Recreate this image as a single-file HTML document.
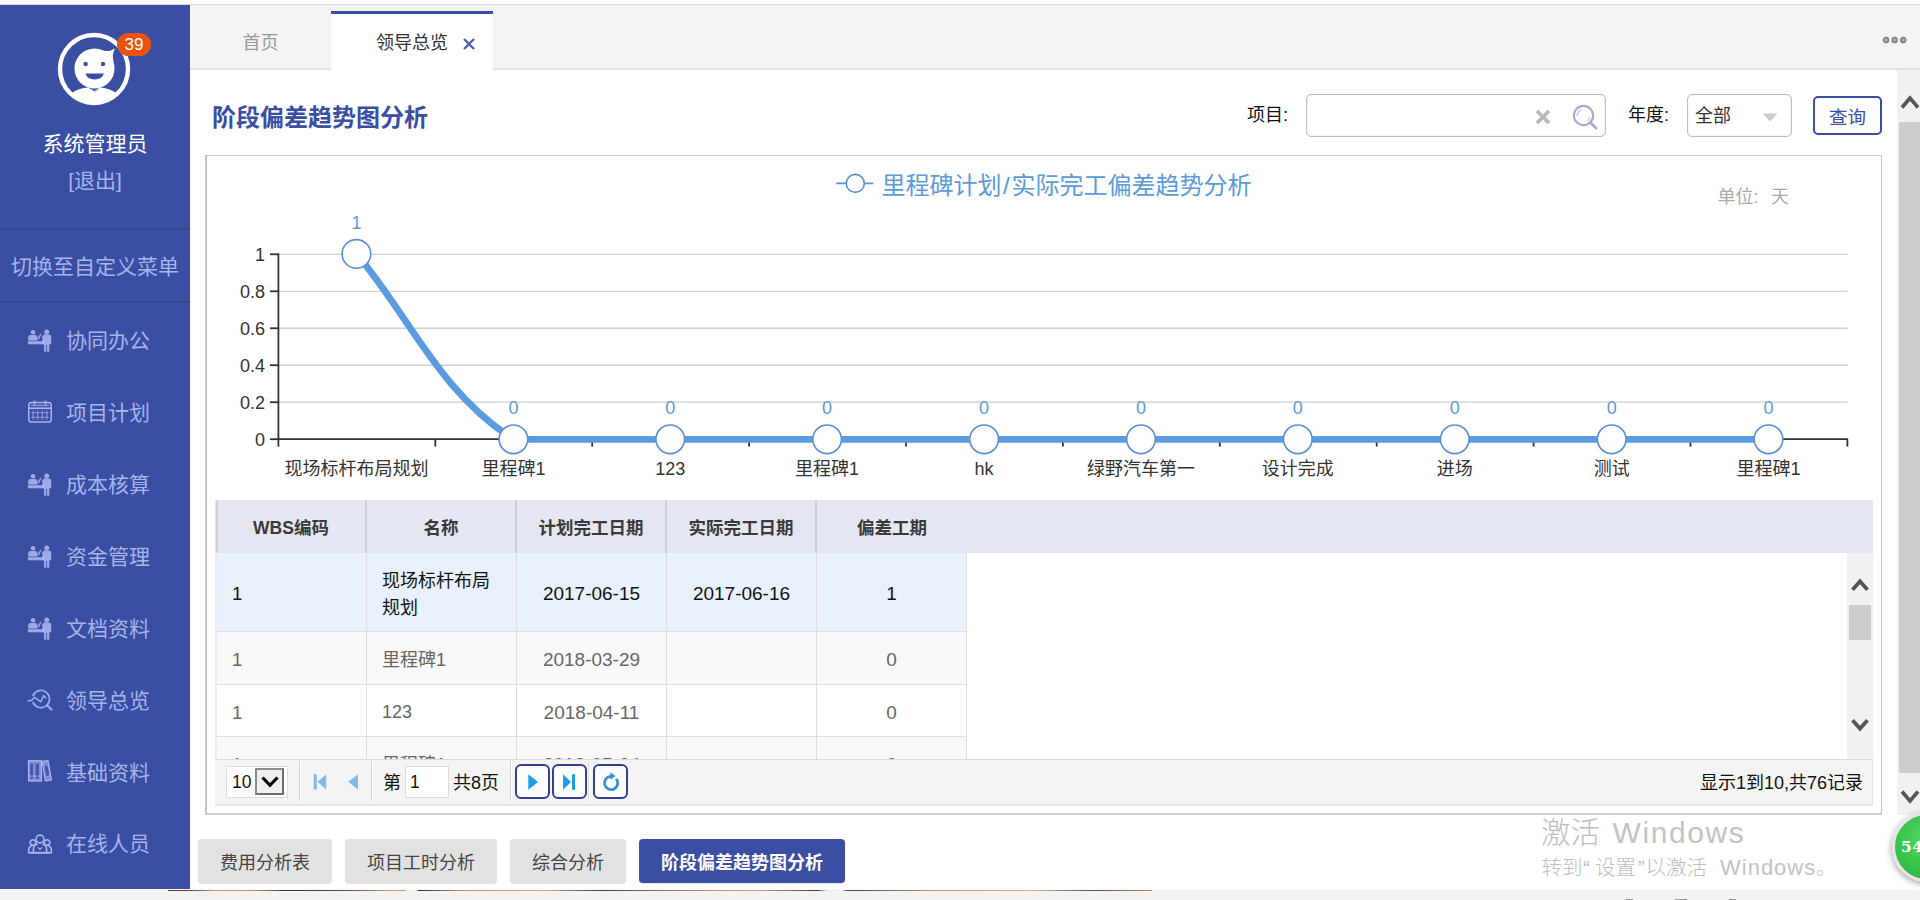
<!DOCTYPE html>
<html lang="zh-CN">
<head>
<meta charset="utf-8">
<title>领导总览 - 阶段偏差趋势图分析</title>
<style>
*{box-sizing:border-box;margin:0;padding:0}
html,body{width:1920px;height:900px;overflow:hidden;background:#fff}
body{position:relative;font-family:"Liberation Sans","Noto Sans CJK SC",sans-serif;color:#333;font-size:18px}
.abs{position:absolute}
/* top chrome */
#topline{left:0;top:4px;width:1920px;height:1px;background:#d9d9d9}
/* sidebar */
#sidebar{left:0;top:5px;width:190px;height:884px;background:#3a4ea3;color:#a5b4ec}
#sidebar .name{left:0;width:190px;top:124px;height:30px;line-height:30px;text-align:center;color:#fff;font-size:21px}
#sidebar .logout{left:0;width:190px;top:161px;height:30px;line-height:30px;text-align:center;font-size:21px}
#sidebar .sep{left:0;width:190px;height:2px;background:#344594}
#sidebar .switch{left:0;width:190px;top:247px;height:30px;line-height:30px;text-align:center;font-size:21px}
#sidebar .mi{left:0;width:190px;height:30px;line-height:30px;font-size:21px;padding-left:66px;white-space:nowrap}
#sidebar .mi svg{position:absolute;left:27px;top:3px}
.badge{left:117px;top:28px;width:34px;height:23px;border-radius:12px;background:#e9530d;color:#fff;font-size:17px;line-height:23px;text-align:center}
/* tab bar */
#tabbar{left:190px;top:5px;width:1730px;height:65px;background:#f4f4f4;border-bottom:2px solid #e1e1e1}
#tabbar .t1{left:0;top:0;width:141px;height:64px;line-height:76px;text-align:center;color:#999;font-size:18px}
#tabbar .t2{left:141px;top:6px;width:162px;height:59px;background:#fff;border-top:3px solid #3a4ea3;font-size:18px;color:#333}
#tabbar .t2 span{position:absolute;left:45px;top:14px;line-height:30px}
/* content */
#title{left:212px;top:101px;font-size:24px;font-weight:bold;color:#3a4ea3;line-height:34px;white-space:nowrap}
.lbl{font-size:18px;color:#111;line-height:30px;white-space:nowrap}
.box{box-shadow:inset 0 0 1px #b8b8b8;border:1px solid #bebebe;border-radius:5px;background:#fff}
#qbtn{left:1813px;top:96px;width:69px;height:39px;border:2px solid #3a4ea3;border-radius:5px;color:#3a4ea3;font-size:18.500px;line-height:39px;text-align:center;background:#fff}
#panel{left:205px;top:155px;width:1677px;height:660px;border-style:solid;border-color:#c8c8c8 #c6c6c6 #cdcdcd #c6c6c6;border-width:1px 1px 2px 2px;background:#fff}

#tabbar .x{left:272px;top:32px}
#tabbar .dots{left:1691px;top:29px}
#f1{left:1247px;top:100px}
#in1{left:1306px;top:94px;width:300px;height:43px}
#f2{left:1628px;top:100px}
#in2{left:1687px;top:94px;width:105px;height:43px}
#in2 span{position:absolute;left:7px;top:6px;font-size:18px;line-height:30px;color:#333}
/* page scrollbar */
#vs{left:1897px;top:70px;width:23px;height:745px;background:#f1f1f1}
#vs .thumb{left:2px;top:52px;width:21px;height:651px;background:#cdcdcd}
/* bottom */
#botbar{left:0;top:889px;width:1920px;height:11px;background:#f3f3f3;border-top:1px solid #fbfbfb}
#botbar i{position:absolute;display:block;height:1px}
.btab{top:839px;height:44px;border-radius:4px;background:#e2e2e2;color:#444;font-size:18px;line-height:49px;text-align:center;white-space:nowrap;box-shadow:0 1px 1px rgba(0,0,0,.12)}
.btab.on{background:#3a4ea3;color:#fff;font-weight:bold}
.wm{color:#bebebe;white-space:nowrap;font-weight:300}
.wm span{position:absolute;top:0}
.wm .la{color:#c3c3c3;font-weight:400}
#wm1{left:0;top:811px;font-size:29.500px;line-height:44px}
#wm2{left:0;top:850.500px;font-size:20.500px;line-height:34px}
#ball{left:1892px;top:812px;width:70px;height:70px;border-radius:50%;background:radial-gradient(circle at 45% 40%,#4fd862 0%,#37c24a 55%,#27a83a 100%);border:3px solid #ece2ec;box-shadow:0 2px 7px rgba(0,0,0,.4);color:#fff;font-family:"DejaVu Serif","Liberation Serif",serif;font-weight:bold;font-size:15.500px;line-height:64px;padding-left:6px;letter-spacing:.5px}

/* grid */
#ghead{left:215px;top:500px;width:1658px;height:53px;background:#e4e7f2}
#ghead div{position:absolute;top:0;height:53px;width:150px;line-height:57px;text-align:center;font-weight:bold;font-size:17.500px;color:#3a3a3a;border-right:2px solid #cfd0d6;white-space:nowrap}
#ghead i{position:absolute;left:1px;top:0;width:2px;height:53px;background:#cfd0d8}
#gbody{left:215px;top:553px;width:1632px;height:206px;overflow:hidden;background:#fff;box-shadow:inset 2px 0 0 #ececec}
.row{position:absolute;left:2px;width:750px}
.row div{position:absolute;top:0;height:100%;width:150px;border-right:1px solid #dedede;border-bottom:1px solid #dedede;font-size:18px;white-space:nowrap}
.row .c{text-align:center;font-size:19px}
.row .n{font-size:18.500px}
.row .l{padding-left:15px}
#gvs{left:1847px;top:553px;width:26px;height:206px;background:#f1f1f1}
#gvs .th{position:absolute;left:2px;top:52px;width:22px;height:35px;background:#cdcdcd}
#pager{left:215px;top:759px;width:1658px;height:47px;background:#f4f4f4;border-top:1px solid #dcdcdc;border-bottom:2px solid #e6e6e6;border-right:1px solid #e6e6e6;font-size:18px;color:#111}
#pager .sep{position:absolute;top:1px;width:2px;height:40px;background:#d2d2d2;border-right:1px solid #fff}
#pager .pb{position:absolute;top:4px;width:35px;height:35px;border:2px solid #323f92;border-radius:6px;background:#fdfdff}
#pager .t{position:absolute;top:8px;line-height:30px;white-space:nowrap}
</style>
</head>
<body>
<div id="topline" class="abs"></div>

<div id="sidebar" class="abs">
  <svg class="abs" style="left:44px;top:18px" width="100" height="100" viewBox="0 0 100 100">
    <defs><clipPath id="avc"><circle cx="50" cy="46" r="33"/></clipPath></defs>
    <circle cx="50" cy="46" r="34" fill="none" stroke="#fff" stroke-width="4.4"/>
    <g clip-path="url(#avc)" fill="#fff">
      <path d="M22 82q2-16 22-17.500l6 4 6-4q20 1.500 22 17.500z"/>
      <circle cx="50.500" cy="45.500" r="20"/>
      <path d="M56 27Q64 29.800 71 25.400Q67.600 31 69.600 39z"/>
    </g>
    <circle cx="41.600" cy="41" r="2.200" fill="#3a4ea3"/><circle cx="59" cy="41" r="2.200" fill="#3a4ea3"/>
    <path d="M41.400 50.600h18.400q-1.600 5.900-9.200 5.900t-9.200-5.900z" fill="#3a4ea3"/>
    <path d="M46.600 66.200l4 2.600 4-2.600" fill="none" stroke="#c9d0ea" stroke-width="1.100"/>
  </svg>
  <div class="abs badge">39</div>
  <div class="abs name">系统管理员</div>
  <div class="abs logout">[退出]</div>
  <div class="abs sep" style="top:223px"></div>
  <div class="abs switch">切换至自定义菜单</div>
  <div class="abs sep" style="top:296px"></div>
  <div class="abs mi" style="top:321px"><svg width="26" height="24" viewBox="0 0 26 24"><g fill="#a7b6ee" fill-opacity=".9"><circle cx="6.1" cy="3.2" r="2.3"/><path d="M1.2 11.4V8.6q0-2.7 2.7-2.7h4.3q2.3 0 2.3 2.5v3z"/><rect x="1" y="12.2" width="17" height="3.1"/><circle cx="19.7" cy="3.0" r="2.5"/><path d="M15.3 15.2V8.3q0-2.8 2.8-2.8h3.3q2.8 0 2.8 2.8v6.9h-1.9v7.6h-2.2v-7h-0.8v7h-2.2v-7.6z"/><path d="M10.6 9.6l2.6-5 1.1.6-2.3 5.4z"/></g></svg>协同办公</div>
  <div class="abs mi" style="top:393px"><svg style="top:2px" width="26" height="24" viewBox="0 0 26 24"><g fill="none" stroke="#a7b6ee" stroke-width="1.5"><rect x="1.8" y="2.6" width="22.4" height="19.4" rx="2.6"/><path d="M1.8 8.2h22.4" stroke-width="1.6"/><path d="M7.5 0.8v3.6M18.5 0.8v3.6" stroke-width="1.8"/><path d="M4 5.4h18" stroke-width="1.6" opacity=".7"/><path d="M4.5 12.8h17M4.5 17.2h17M6.100 10.400v9.400M10.700 10.400v9.400M15.300 10.400v9.400M19.900 10.400v9.400" stroke-width="1.1" opacity=".75"/></g></svg>项目计划</div>
  <div class="abs mi" style="top:465px"><svg width="26" height="24" viewBox="0 0 26 24"><g fill="#a7b6ee" fill-opacity=".9"><circle cx="6.1" cy="3.2" r="2.3"/><path d="M1.2 11.4V8.6q0-2.7 2.7-2.7h4.3q2.3 0 2.3 2.5v3z"/><rect x="1" y="12.2" width="17" height="3.1"/><circle cx="19.7" cy="3.0" r="2.5"/><path d="M15.3 15.2V8.3q0-2.8 2.8-2.8h3.3q2.8 0 2.8 2.8v6.9h-1.9v7.6h-2.2v-7h-0.8v7h-2.2v-7.6z"/><path d="M10.6 9.6l2.6-5 1.1.6-2.3 5.4z"/></g></svg>成本核算</div>
  <div class="abs mi" style="top:537px"><svg width="26" height="24" viewBox="0 0 26 24"><g fill="#a7b6ee" fill-opacity=".9"><circle cx="6.1" cy="3.2" r="2.3"/><path d="M1.2 11.4V8.6q0-2.7 2.7-2.7h4.3q2.3 0 2.3 2.5v3z"/><rect x="1" y="12.2" width="17" height="3.1"/><circle cx="19.7" cy="3.0" r="2.5"/><path d="M15.3 15.2V8.3q0-2.8 2.8-2.8h3.3q2.8 0 2.8 2.8v6.9h-1.9v7.6h-2.2v-7h-0.8v7h-2.2v-7.6z"/><path d="M10.6 9.6l2.6-5 1.1.6-2.3 5.4z"/></g></svg>资金管理</div>
  <div class="abs mi" style="top:609px"><svg width="26" height="24" viewBox="0 0 26 24"><g fill="#a7b6ee" fill-opacity=".9"><circle cx="6.1" cy="3.2" r="2.3"/><path d="M1.2 11.4V8.6q0-2.7 2.7-2.7h4.3q2.3 0 2.3 2.5v3z"/><rect x="1" y="12.2" width="17" height="3.1"/><circle cx="19.7" cy="3.0" r="2.5"/><path d="M15.3 15.2V8.3q0-2.8 2.8-2.8h3.3q2.8 0 2.8 2.8v6.9h-1.9v7.6h-2.2v-7h-0.8v7h-2.2v-7.6z"/><path d="M10.6 9.6l2.6-5 1.1.6-2.3 5.4z"/></g></svg>文档资料</div>
  <div class="abs mi" style="top:681px"><svg width="26" height="24" viewBox="0 0 26 24"><g fill="none" stroke="#a7b6ee" stroke-opacity=".88" stroke-width="1.8" stroke-linecap="round" stroke-linejoin="round"><path d="M6.1 6.5A8.6 8.6 0 1 1 6.1 13.7"/><path d="M20.3 16.6l4.2 3.800" stroke-width="2.3"/><path d="M1.2 11.9l3.400-.5 3.100-3.100 6.200 4.500 2.700-6.200 2 2.200" stroke-width="1.6"/></g></svg>领导总览</div>
  <div class="abs mi" style="top:753px"><svg style="top:2px" width="26" height="24" viewBox="0 0 26 24"><rect x="1.600" y="0.800" width="12.800" height="20.200" fill="#a7b6ee" fill-opacity=".62" stroke="#a7b6ee" stroke-width="1.300"/><rect x="3.2" y="3.6" width="2.8" height="15" fill="#4558ab"/><rect x="8.600" y="3.600" width="3.400" height="15" fill="#4558ab"/><rect x="2.200" y="15.400" width="11" height="1.400" fill="#a7b6ee" fill-opacity=".6"/><path d="M15.300 1.400L21 0.700 24.500 20 18.300 20.900z" fill="#a7b6ee" fill-opacity=".62" stroke="#a7b6ee" stroke-width="1.200"/><ellipse cx="19.800" cy="10.600" rx="1.700" ry="5.400" transform="rotate(-10 19.800 10.600)" fill="#4558ab"/></svg>基础资料</div>
  <div class="abs mi" style="top:824px"><svg width="26" height="24" viewBox="0 0 26 24"><g fill="none" stroke="#a7b6ee" stroke-width="1.6" stroke-linejoin="round"><circle cx="13" cy="7" r="3.9"/><circle cx="6" cy="10.6" r="2.8"/><circle cx="20" cy="10.6" r="2.8"/><path d="M6.4 20.6v-3.4q0-4.6 4.2-5.2M19.6 20.6v-3.4q0-4.6-4.2-5.2"/><path d="M1.6 20.6v-2.4q0-3.6 3.2-4.4M24.4 20.6v-2.4q0-3.6-3.2-4.4"/><path d="M1.2 20.8h23.6" stroke-width="1.9"/><path d="M10.8 15.4l2.2 2 2.2-2" stroke-width="1.2"/></g></svg>在线人员</div>
</div>

<div id="tabbar" class="abs">
  <div class="abs t1">首页</div>
  <div class="abs t2"><span>领导总览</span></div>
  <svg class="abs x" width="14" height="14" viewBox="0 0 14 14"><path d="M2 2l10 10M12 2L2 12" stroke="#4a5bb0" stroke-width="2.3" fill="none"/></svg>
  <svg class="abs dots" width="28" height="12" viewBox="0 0 28 12"><g fill="#aaa" stroke="#777" stroke-width="1.2"><circle cx="5" cy="6" r="2.6"/><circle cx="13.600" cy="6" r="2.600"/><circle cx="22.200" cy="6" r="2.600"/></g></svg>
</div>

<div id="title" class="abs">阶段偏差趋势图分析</div>
<div id="f1" class="abs lbl">项目:</div>
<div id="in1" class="abs box">
  <svg class="abs" style="left:227px;top:13px" width="18" height="18" viewBox="0 0 18 18"><path d="M3 3l12 12M15 3L3 15" stroke="#bababa" stroke-width="3.800" fill="none"/></svg>
  <svg class="abs" style="left:262px;top:6px" width="32" height="32" viewBox="0 0 32 32"><g fill="none" stroke-linecap="round"><circle cx="14.500" cy="14.500" r="9.600" stroke="#a4a9d0" stroke-width="2.100"/><path d="M21.600 21.800l5.600 5.400" stroke="#a4a9d0" stroke-width="2.600"/><path d="M8.200 14.600a6.300 6.300 0 0 1 3.400-5.600" stroke="#c9cce4" stroke-width="1.600"/><path d="M18.400 19.600a6.300 6.300 0 0 0 2.200-3" stroke="#c9cce4" stroke-width="1.400"/></g></svg>
</div>
<div id="f2" class="abs lbl">年度:</div>
<div id="in2" class="abs box"><span>全部</span>
  <svg class="abs" style="left:74px;top:18px" width="16" height="9" viewBox="0 0 16 9"><path d="M0.500 0.500h15l-7.500 8z" fill="#cdcdcd"/></svg>
</div>
<div id="qbtn" class="abs">查询</div>
<div id="panel" class="abs"></div>
<svg id="chart" class="abs" style="left:207px;top:156px" width="1675" height="344" viewBox="207 156 1675 344" font-family="'Liberation Sans','Noto Sans CJK SC',sans-serif">
<path d="M279 402.22H1847.500" stroke="#cfcfcf" stroke-width="1.300" fill="none"/>
<path d="M279 365.24H1847.500" stroke="#cfcfcf" stroke-width="1.300" fill="none"/>
<path d="M279 328.26H1847.500" stroke="#cfcfcf" stroke-width="1.300" fill="none"/>
<path d="M279 291.28H1847.500" stroke="#cfcfcf" stroke-width="1.300" fill="none"/>
<path d="M279 254.30H1847.500" stroke="#cfcfcf" stroke-width="1.300" fill="none"/>
<g stroke="#333" stroke-width="1.800" fill="none">
<path d="M278.400 253.40V440.100"/>
<path d="M277.500 439.200H1847.900"/>
<path d="M270 439.20H278.400"/>
<path d="M270 402.22H278.400"/>
<path d="M270 365.24H278.400"/>
<path d="M270 328.26H278.400"/>
<path d="M270 291.28H278.400"/>
<path d="M270 254.30H278.400"/>
<path d="M278.40 439.200V446.600"/>
<path d="M435.30 439.200V446.600"/>
<path d="M592.20 439.200V446.600"/>
<path d="M749.10 439.200V446.600"/>
<path d="M906.00 439.200V446.600"/>
<path d="M1062.90 439.200V446.600"/>
<path d="M1219.80 439.200V446.600"/>
<path d="M1376.70 439.200V446.600"/>
<path d="M1533.60 439.200V446.600"/>
<path d="M1690.50 439.200V446.600"/>
<path d="M1847.40 439.200V446.600"/>
</g>
<g font-size="18" fill="#333" text-anchor="end">
<text x="265" y="445.6">0</text>
<text x="265" y="408.6">0.2</text>
<text x="265" y="371.6">0.4</text>
<text x="265" y="334.7">0.6</text>
<text x="265" y="297.7">0.8</text>
<text x="265" y="260.7">1</text>
</g>
<g font-size="18" fill="#333" text-anchor="middle">
<text x="356.4" y="474.600">现场标杆布局规划</text>
<text x="513.4" y="474.600">里程碑1</text>
<text x="670.2" y="474.600">123</text>
<text x="827.1" y="474.600">里程碑1</text>
<text x="984.1" y="474.600">hk</text>
<text x="1141.0" y="474.600">绿野汽车第一</text>
<text x="1297.8" y="474.600">设计完成</text>
<text x="1454.8" y="474.600">进场</text>
<text x="1611.7" y="474.600">测试</text>
<text x="1768.5" y="474.600">里程碑1</text>
</g>
<path d="M356.4 253.800C409.400 316 438.300 391 513.4 439.300H1768.5" fill="none" stroke="#5b9be0" stroke-width="6.800" stroke-linejoin="round"/>
<g fill="#fff" stroke="#5a8fd6" stroke-width="1.600">
<circle cx="356.4" cy="253.900" r="14.300"/>
<circle cx="513.4" cy="439.300" r="14.300"/>
<circle cx="670.2" cy="439.300" r="14.300"/>
<circle cx="827.1" cy="439.300" r="14.300"/>
<circle cx="984.1" cy="439.300" r="14.300"/>
<circle cx="1141.0" cy="439.300" r="14.300"/>
<circle cx="1297.8" cy="439.300" r="14.300"/>
<circle cx="1454.8" cy="439.300" r="14.300"/>
<circle cx="1611.7" cy="439.300" r="14.300"/>
<circle cx="1768.5" cy="439.300" r="14.300"/>
</g>
<g font-size="18" fill="#5b9bd8" text-anchor="middle">
<text x="356.4" y="228.500">1</text>
<text x="513.4" y="413.500">0</text>
<text x="670.2" y="413.500">0</text>
<text x="827.1" y="413.500">0</text>
<text x="984.1" y="413.500">0</text>
<text x="1141.0" y="413.500">0</text>
<text x="1297.8" y="413.500">0</text>
<text x="1454.8" y="413.500">0</text>
<text x="1611.7" y="413.500">0</text>
<text x="1768.5" y="413.500">0</text>
</g>
<path d="M836.300 183.400H873.300" stroke="#5a8fd6" stroke-width="1.600"/>
<circle cx="855.300" cy="183.400" r="9" fill="#fff" stroke="#5a8fd6" stroke-width="1.600"/>
<text x="881.500" y="193.800" font-size="24" fill="#5b9bd8">里程碑计划<tspan dx="1.500">/</tspan><tspan dx="1.800">实际完工偏差趋势分析</tspan></text>
<text x="1717.500" y="203.300" font-size="18" fill="#aaa">单位:<tspan x="1771">天</tspan></text>
</svg>
<div id="ghead" class="abs"><i></i><div style="left:2px">WBS编码</div><div style="left:152px">名称</div><div style="left:302px">计划完工日期</div><div style="left:452px">实际完工日期</div><div style="left:602px;border-right:0">偏差工期</div></div>
<div id="gbody" class="abs">
<div class="row" style="top:0;height:79px;background:#e8f1fd;color:#111"><div class="l n" style="left:0;line-height:82px">1</div><div class="l" style="left:150px;line-height:27px;padding-top:15px;white-space:normal">现场标杆布局<br>规划</div><div class="c" style="left:300px;line-height:82px">2017-06-15</div><div class="c" style="left:450px;line-height:82px">2017-06-16</div><div class="c" style="left:600px;line-height:82px">1</div></div>
<div class="row" style="top:79px;height:53px;background:#f9f9f9;color:#666"><div class="l n" style="left:0px;line-height:56px">1</div><div class="l" style="left:150px;line-height:56px">里程碑1</div><div class="c" style="left:300px;line-height:56px">2018-03-29</div><div class="c" style="left:450px;line-height:56px"></div><div class="c" style="left:600px;line-height:56px">0</div></div>
<div class="row" style="top:132px;height:52px;background:#fff;color:#666"><div class="l n" style="left:0px;line-height:55px">1</div><div class="l" style="left:150px;line-height:55px">123</div><div class="c" style="left:300px;line-height:55px">2018-04-11</div><div class="c" style="left:450px;line-height:55px"></div><div class="c" style="left:600px;line-height:55px">0</div></div>
<div class="row" style="top:184px;height:53px;background:#f9f9f9;color:#666"><div class="l n" style="left:0px;line-height:56px">1</div><div class="l" style="left:150px;line-height:56px">里程碑1</div><div class="c" style="left:300px;line-height:56px">2018-05-04</div><div class="c" style="left:450px;line-height:56px"></div><div class="c" style="left:600px;line-height:56px">0</div></div>
</div>
<div id="gvs" class="abs"><div class="th"></div>
  <svg class="abs" style="left:4px;top:25px" width="18" height="14" viewBox="0 0 18 14"><path d="M1.500 11.800l7.500-8.400 7.500 8.400" fill="none" stroke="#555" stroke-width="3.700"/></svg>
  <svg class="abs" style="left:4px;top:165px" width="18" height="14" viewBox="0 0 18 14"><path d="M1.500 2.200l7.500 8.400 7.500-8.400" fill="none" stroke="#555" stroke-width="3.700"/></svg>
</div>
<div id="pager" class="abs">
  <div class="abs" style="left:11px;top:6px;width:62px;height:32px;background:#fff;border:1px solid #dcdcdc"></div>
  <div class="t" style="left:17px;top:6.500px;font-size:17.500px">10</div>
  <div class="abs" style="left:40px;top:8px;width:29px;height:27px;background:#efefef;border:2px solid #6e6e6e;border-top-color:#8c8c8c;border-left-color:#8c8c8c"></div>
  <svg class="abs" style="left:46px;top:15px" width="18" height="13" viewBox="0 0 18 13"><path d="M1.500 2.500l7.500 7.800 7.500-7.800" fill="none" stroke="#000" stroke-width="3.200"/></svg>
  <div class="sep" style="left:84px"></div>
  <svg class="abs" style="left:98px;top:13px" width="14" height="18" viewBox="0 0 14 18"><path d="M0.700 1.200h3.100v15.200h-3.100zM13.200 1.200v15.200l-8.700-7.600z" fill="#7fbaeb"/></svg>
  <svg class="abs" style="left:131px;top:13px" width="13" height="18" viewBox="0 0 13 18"><path d="M12 1.200v15.200l-9.800-7.600z" fill="#7fbaeb"/></svg>
  <div class="sep" style="left:156px"></div>
  <div class="t" style="left:168px">第</div>
  <div class="abs" style="left:190px;top:6px;width:44px;height:32px;background:#fff;border:1px solid #dcdcdc"></div>
  <div class="t" style="left:195px;top:7px;font-size:17.500px">1</div>
  <div class="t" style="left:238px">共8页</div>
  <div class="sep" style="left:295px"></div>
  <div class="pb" style="left:300px"><svg class="abs" style="left:10px;top:7px" width="12" height="18" viewBox="0 0 12 18"><path d="M1.300 1.200v15.600l9.700-7.800z" fill="#1f9be9"/></svg></div>
  <div class="pb" style="left:337px"><svg class="abs" style="left:9px;top:7px" width="14" height="18" viewBox="0 0 14 18"><path d="M0 1.200v15.600l8-7.800zM9 1.200h3v15.600h-3z" fill="#1f9be9"/></svg></div>
  <div class="sep" style="left:373px;opacity:.6"></div>
  <div class="pb" style="left:378px"><svg class="abs" style="left:7px;top:6px" width="20" height="20" viewBox="0 0 20 20"><path d="M14.200 6.800A6.600 6.600 0 1 1 9.100 4.400" fill="none" stroke="#3a8fd4" stroke-width="2.800"/><path d="M8.300 0.300L13.600 4 8.300 7.700z" fill="#3a8fd4"/></svg></div>
  <div class="t" style="right:9px">显示1到10,共76记录</div>
</div>


<div id="vs" class="abs">
  <div class="abs thumb"></div>
  <svg class="abs" style="left:3px;top:24px" width="20" height="16" viewBox="0 0 20 16"><path d="M2 13.500l8-9.500 8 9.500" fill="none" stroke="#555" stroke-width="3.600"/></svg>
  <svg class="abs" style="left:3px;top:719px" width="20" height="16" viewBox="0 0 20 16"><path d="M2 2.500l8 9.500 8-9.500" fill="none" stroke="#555" stroke-width="3.600"/></svg>
</div>

<div class="abs btab" style="left:198px;width:134px">费用分析表</div>
<div class="abs btab" style="left:345px;width:152px">项目工时分析</div>
<div class="abs btab" style="left:510px;width:116px">综合分析</div>
<div class="abs btab on" style="left:639px;width:206px">阶段偏差趋势图分析</div>

<div id="wm1" class="abs wm"><span style="left:1541px">激活</span><span class="la" style="left:1612.500px;font-size:30px;letter-spacing:1.600px">Windows</span></div>
<div id="wm2" class="abs wm"><span style="left:1541.500px">转到</span><span style="left:1583px">“</span><span style="left:1595px">设置</span><span style="left:1638px">”</span><span style="left:1645.500px">以激活</span><span class="la" style="left:1720px;font-size:22px;letter-spacing:1px">Windows</span><span style="left:1816px">。</span></div>
<div id="ball" class="abs">54</div>
<div id="botbar" class="abs">
  <i style="left:168px;top:0;width:984px;background:linear-gradient(90deg,#4c392e 0,#5a4436 2%,#d79a6c 5%,#c98a5e 9%,#3e2f28 12%,#6b4a38 18%,#e0a477 23%,#d4936a 24%,#f4f0ee 24.300%,#f4f0ee 25.200%,#3c2e2a 25.500%,#c9905f 30%,#e3ab7c 38%,#54392b 44%,#b57e58 52%,#dca176 60%,#4a352b 66%,#f0e9e4 67%,#f0e9e4 68.500%,#5c4031 69%,#d09568 78%,#e6b185 88%,#6a4b39 94%,#c58b60 100%)"></i>
  <i style="left:1626px;top:9px;width:7px;background:#999"></i><i style="left:1675px;top:9px;width:12px;background:#999"></i><i style="left:1729px;top:9px;width:7px;background:#999"></i>
</div>

</body>
</html>
